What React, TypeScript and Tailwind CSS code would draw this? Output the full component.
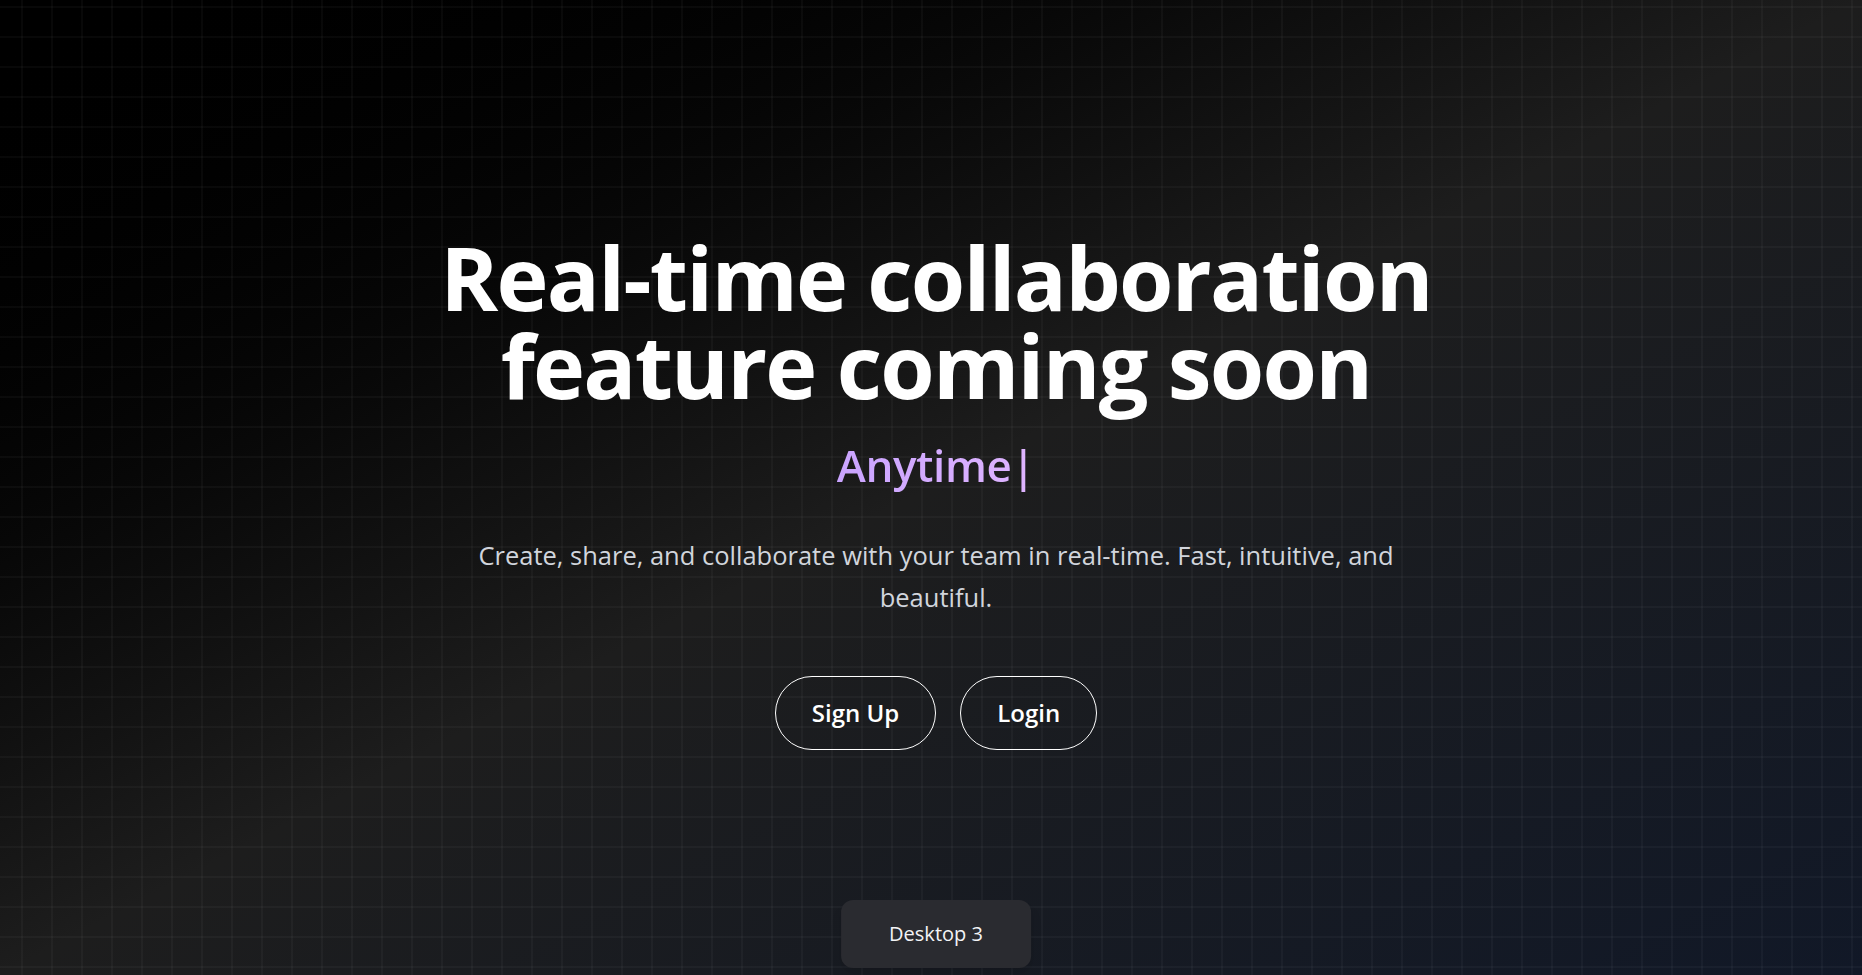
import React from 'react';

export default function App() {
    return (
        <div
            className="relative min-h-screen w-full overflow-hidden bg-linear-to-br from-black via-[#1d1d1d] to-[#111827] text-white"
            style={{ fontFamily: '"Open Sans", "Noto Sans", sans-serif' }}
        >
            {/* grid overlay */}
            <div className="pointer-events-none absolute inset-0 bg-[linear-gradient(to_right,rgba(255,255,255,0.03)_2px,transparent_2px),linear-gradient(to_bottom,rgba(255,255,255,0.03)_2px,transparent_2px)] bg-size-[30px_30px] bg-position-[21px_6px]" />

            <main className="relative flex min-h-screen flex-col items-center justify-center pl-[10px] pt-[8px] text-center">
                <h1 className="text-[88px] font-bold leading-[88px] tracking-[-0.02em]">
                    Real-time collaboration
                    <br />
                    feature coming soon
                </h1>

                <div className="mt-[28px] bg-linear-to-r from-[#caa4ff] to-[#dfb4ff] bg-clip-text text-[44px] font-semibold leading-[56px] tracking-[-0.01em] text-transparent">
                    Anytime|
                </div>

                <p className="mt-[41px] max-w-[1000px] text-[25.5px] leading-[42px] text-gray-300">
                    Create, share, and collaborate with your team in real-time. Fast, intuitive, and beautiful.
                </p>

                <div className="mt-[58px] flex items-center gap-6">
                    <button className="rounded-full border border-white px-9 py-5 text-2xl font-semibold leading-8 text-white">
                        Sign Up
                    </button>
                    <button className="rounded-full border border-white px-9 py-5 text-2xl font-semibold leading-8 text-white">
                        Login
                    </button>
                </div>
            </main>

            {/* page label */}
            <div className="absolute bottom-[7px] left-1/2 ml-[5px] -translate-x-1/2 rounded-xl bg-[#2a2b30] px-12 py-5 text-xl leading-7 text-gray-100 shadow-lg">
                Desktop 3
            </div>
        </div>
    );
}
